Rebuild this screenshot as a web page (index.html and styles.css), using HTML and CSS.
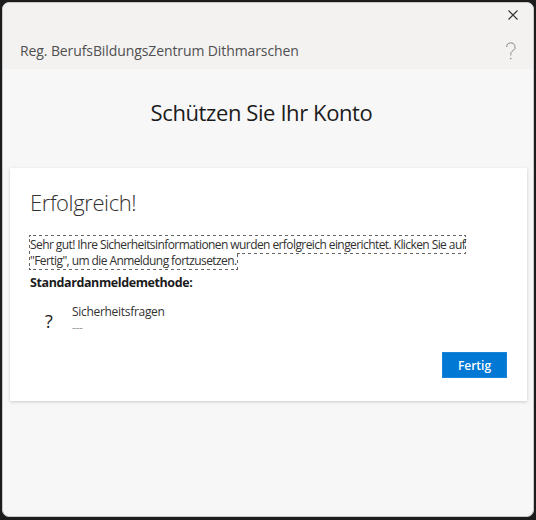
FILE: index.html
```html
<html>
  <head>
    <title>Schützen Sie Ihr Konto</title>
    <meta charset="utf-8">
    <link rel="stylesheet" href="styles.css">
  </head>
  <body>
  <div class="frame">
      <div class="window">
          <div class="head">
              <div class="head-top">
                  <svg class="close" width="10" height="10" viewBox="0 0 10 10">
                      <path d="M0.5 0.5L9.5 9.5M9.5 0.5L0.5 9.5" stroke="#333" stroke-width="1.1" fill="none"/>
                  </svg>
              </div>
              <div class="head-row">
                  <div class="org">Reg. BerufsBildungsZentrum Dithmarschen</div>
                  <svg class="help" width="12" height="18" viewBox="0 0 12 18">
                      <path d="M1.5 5a4.3 4.3 0 1 1 6.4 3.8c-1.5.8-2.1 1.8-2.1 3.4v1.3" stroke="#8a8a8a" stroke-width="1" fill="none"/>
                      <circle cx="5.8" cy="16.6" r="0.8" fill="#8a8a8a"/>
                  </svg>
              </div>
          </div>
          <div class="main">
              <div class="title">Schützen Sie Ihr Konto</div>
              <div class="card">
                  <div class="card-title">Erfolgreich!</div>
                  <div class="msg">
                      <span class="focus">Sehr gut! Ihre Sicherheitsinformationen wurden erfolgreich eingerichtet. Klicken Sie auf "Fertig", um die Anmeldung fortzusetzen.</span>
                  </div>
                  <div class="label">Standardanmeldemethode:</div>
                  <div class="method">
                      <div class="method-icon">?</div>
                      <div class="method-text">
                          <div class="method-name">Sicherheitsfragen</div>
                          <div class="method-sub">---</div>
                      </div>
                  </div>
                  <div class="actions">
                      <button class="btn">Fertig</button>
                  </div>
              </div>
          </div>
      </div>
  </div>
  </body>
</html>
```

FILE: styles.css
```css
body {
    margin: 0;
    background-color: #1c1c1c;
    font-family: "Open Sans", "Noto Sans", sans-serif;
    color: #1b1b1b;
}

.frame {
    width: 536px;
    height: 520px;
    box-sizing: border-box;
    padding: 2px 2px 3px 2px;
    background-color: #1c1c1c;
}

.window {
    height: 100%;
    box-sizing: border-box;
    border: 1px solid #c9c9c9;
    border-radius: 7px;
    overflow: hidden;
    background-color: #f7f7f7;
}

.head {
    background-color: #f3f2f1;
    height: 66px;
    box-sizing: border-box;
    padding: 3px 14px 0 17px;
}

.head-top {
    display: flex;
    justify-content: flex-end;
    height: 18px;
    align-items: center;
}

.close {
    margin-right: 1px;
}

.head-row {
    display: flex;
    justify-content: space-between;
    align-items: center;
    margin-top: 17px;
}

.org {
    font-size: 14px;
    letter-spacing: -0.1px;
    color: #505050;
}

.help {
    margin-right: 2px;
}

.main {
    padding: 28px 6px 0 7px;
}

.title {
    text-align: center;
    font-size: 22px;
    letter-spacing: -0.4px;
    line-height: 30px;
    padding-right: 14px;
    color: #1b1b1b;
}

.card {
    margin-top: 41px;
    background-color: #fff;
    box-shadow: 0 1px 3px rgba(0, 0, 0, 0.18);
    padding: 19px 20px 23px 20px;
}

.card-title {
    font-size: 22px;
    letter-spacing: -0.4px;
    font-weight: 300;
    line-height: 30px;
    color: #323130;
}

.msg {
    max-width: 455px;
    margin-top: 20px;
    font-size: 12px;
    letter-spacing: -0.58px;
    line-height: 16px;
    color: #323130;
}

.focus {
    outline: 1px dotted #666;
}

.label {
    margin-top: 5px;
    font-size: 12.5px;
    letter-spacing: -0.4px;
    font-weight: bold;
    line-height: 18px;
}

.method {
    display: flex;
    align-items: center;
    margin-top: 12px;
    padding-left: 15px;
}

.method-icon {
    width: 27px;
    font-size: 18px;
    margin-top: 2px;
}

.method-text {
    font-size: 12px;
    letter-spacing: -0.3px;
    line-height: 16px;
    color: #323130;
}

.method-sub {
    color: #a0a0a0;
}

.actions {
    display: flex;
    justify-content: flex-end;
    margin-top: 16px;
}

.btn {
    width: 65px;
    height: 26px;
    border: 1px solid #1b84d8;
    background-color: #0078d4;
    color: #fff;
    font-family: "Open Sans", sans-serif;
    font-size: 12px;
    font-weight: 600;
    padding: 0;
}
```
